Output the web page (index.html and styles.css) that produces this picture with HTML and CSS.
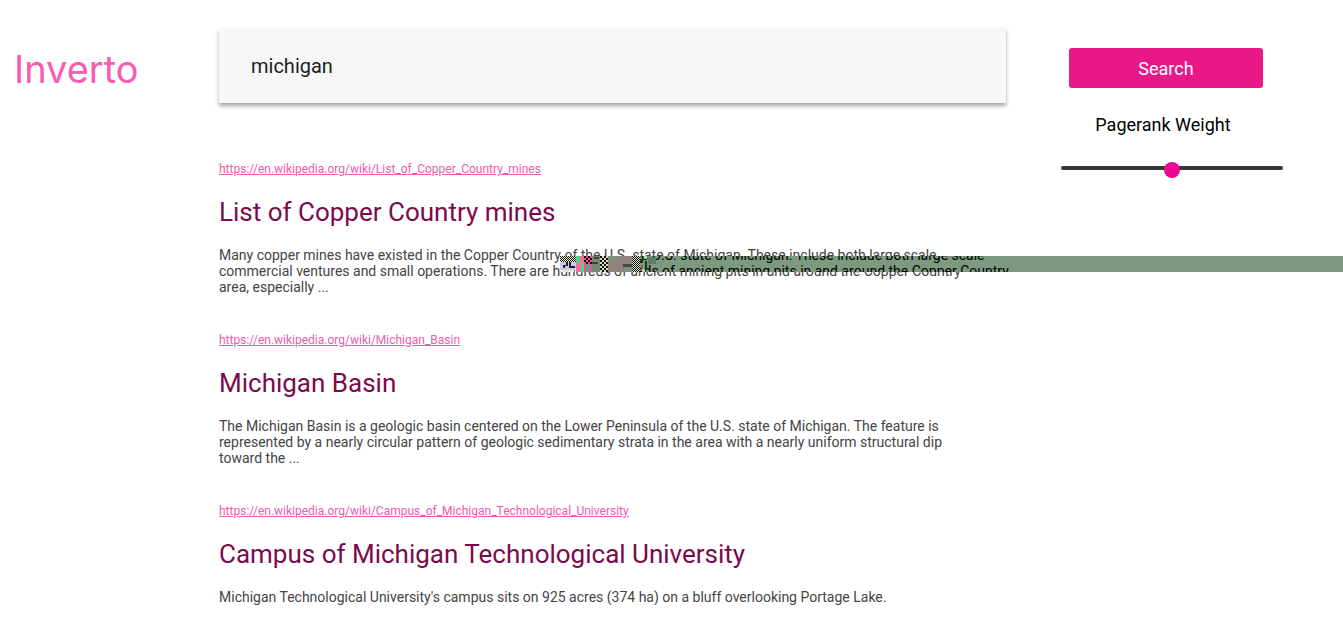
FILE: index.html
```html
<!DOCTYPE html>
<html lang="en">
<head>
<meta charset="utf-8">
<title>Inverto</title>
<link rel="stylesheet" href="styles.css">
</head>
<body>
<form class="page">
  <h1 class="logo">Inverto</h1>
  <main class="main">
    <input class="query" type="text" aria-label="Search query" value="michigan">
    <article class="result">
      <a class="url" href="https://en.wikipedia.org/wiki/List_of_Copper_Country_mines">https://en.wikipedia.org/wiki/List_of_Copper_Country_mines</a>
      <h2 class="title">List of Copper Country mines</h2>
      <div class="excerpt">
        <p class="summary">Many copper mines have existed in the Copper Country of the U.S. state of Michigan. These include both large scale, commercial ventures and small operations. There are hundreds of ancient mining pits in and around the Copper Country area, especially ...</p>
        <div class="band" aria-hidden="true">
          <p class="ghost">Many copper mines have existed in the Copper Country of the U.S. state of Michigan. These include both large scale commercial ventures and small operations. There are hundreds of ancient mining pits in and around the Copper Country</p>
        </div>
        <svg class="noise" viewBox="0 0 104 16" aria-hidden="true">
          <defs>
            <pattern id="check" width="2" height="2" patternUnits="userSpaceOnUse"><path d="M0 0h1v1H0zM1 1h1v1H1z" fill="#111"/></pattern>
            <pattern id="coarse" width="4" height="4" patternUnits="userSpaceOnUse"><path d="M0 0h2v2H0zM2 2h2v2H2z" fill="#111"/></pattern>
          </defs>
          <path d="M8 0h16v6H8z" fill="#f4f5a0"/><path d="M8 0h16v6H8z" fill="url(#check)"/>
          <path d="M8 6h16v8H8z" fill="#cfc4fa"/><path d="M9 12h2v-3h3v-3h2v4h-3v2zM17 6h2v4h4v2h-6z" fill="#222"/>
          <path d="M8 14h14v2H8z" fill="#eef0a5"/>
          <path d="M24 0h8v16h-8z" fill="#f96f9c"/><path d="M24 0h4v7h-4zM29 7h3v9h-3z" fill="#55cf92"/>
          <path d="M32 0h8v16h-8z" fill="#f05090"/><path d="M32 0h8v8h-8z" fill="url(#coarse)"/><path d="M34 8h3v8h-3z" fill="#35b887"/>
          <path d="M40 0h8v16h-8z" fill="#728b75"/><path d="M42 1h5v2h-5zM40 6h6v2h-6z" fill="#473e42"/>
          <path d="M48 0h8v16h-8z" fill="#d9dcc6"/><path d="M48 0h8v16h-8z" fill="url(#coarse)"/>
          <path d="M56 0h24v16H56z" fill="#91827e"/><path d="M56 0h8v5h-8zM72 12h8v4h-8z" fill="#799779"/><path d="M71 8h9v3h-9z" fill="#454943"/>
          <path d="M80 0h8v16h-8z" fill="#dce3cf"/><path d="M80 0h8v16h-8z" fill="url(#check)"/>
          <path d="M88 3h3v4h-3zM93 5h2v8h-2z" fill="#123b1c"/><path d="M89 9h2v6h-2z" fill="#a64e50"/><path d="M92 0h3v3h-3zM90 13h3v3h-3z" fill="#9be0ad"/>
          <path d="M96 1h8v7h-8z" fill="#5f7e63"/>
        </svg>
      </div>
    </article>
    <article class="result">
      <a class="url" href="https://en.wikipedia.org/wiki/Michigan_Basin">https://en.wikipedia.org/wiki/Michigan_Basin</a>
      <h2 class="title">Michigan Basin</h2>
      <p class="summary">The Michigan Basin is a geologic basin centered on the Lower Peninsula of the U.S. state of Michigan. The feature is represented by a nearly circular pattern of geologic sedimentary strata in the area with a nearly uniform structural dip toward the ...</p>
    </article>
    <article class="result">
      <a class="url" href="https://en.wikipedia.org/wiki/Campus_of_Michigan_Technological_University">https://en.wikipedia.org/wiki/Campus_of_Michigan_Technological_University</a>
      <h2 class="title">Campus of Michigan Technological University</h2>
      <p class="summary">Michigan Technological University's campus sits on 925 acres (374 ha) on a bluff overlooking Portage Lake.</p>
    </article>
  </main>
  <aside class="controls">
    <button class="search" type="button">Search</button>
    <label class="weight-label" for="weight">Pagerank Weight</label>
    <input class="weight" id="weight" type="range" min="0" max="100" value="50">
  </aside>
</form>
</body>
</html>
```
FILE: styles.css
```css
* { box-sizing: border-box; }
body { margin: 0; background: #fff; color: #000; font-family: Roboto, "Liberation Sans", sans-serif; overflow-x: hidden; }
.page { display: grid; grid-template-columns: 205px minmax(0, 1fr) 222px; padding: 28px 60px 0 14px; }
.logo { margin: 17px 0 0; color: #f65cb0; font: 400 38px/48px Inter, Lato, sans-serif; }
.main { margin-right: 55px; }
.query { display: block; width: 100%; height: 75px; margin-bottom: 58px; padding: 0 32px; border: 0; outline: 0; background: #f7f7f7; box-shadow: 0 3px 4px rgba(0, 0, 0, .35); color: #212121; font: 400 20px/24px Roboto, sans-serif; }
.result { padding-right: 32px; }
.result + .result { margin-top: 37px; }
.url { display: block; color: #ee5cad; font-size: 12px; line-height: 16px; }
.title { margin: 18px 0; color: #7b0a4d; font-size: 26px; font-weight: 400; line-height: 34px; }
.summary, .ghost { max-width: 755px; margin: 0; color: #444; font-size: 14px; line-height: 16px; }
.excerpt { position: relative; }
.band { position: absolute; top: 9px; left: 389px; width: calc(100vw - 608px); height: 16px; overflow: hidden; background: #7d9a80; }
.ghost { width: 755px; margin: -9px 0 0 -341px; color: #000; }
.noise { position: absolute; top: 9px; left: 333px; width: 104px; height: 16px; }
.controls { display: flex; flex-direction: column; align-items: flex-start; padding-top: 20px; }
.search { width: 194px; height: 40px; margin-left: 8px; padding: 2px 0 0; border: 0; border-radius: 3px; background: #e91889; color: #fff; font: 400 18px/24px Roboto, sans-serif; }
.weight-label { width: 204px; margin: 25px 0 31px; text-align: center; font-size: 18px; line-height: 24px; }
.weight { appearance: none; width: 100%; height: 4px; margin: -2px 0 0; border-radius: 2px; background: #373737; }
.weight::-webkit-slider-thumb { appearance: none; width: 16px; height: 16px; margin-top: 4px; border-radius: 50%; background: #eb0a91; }
```
